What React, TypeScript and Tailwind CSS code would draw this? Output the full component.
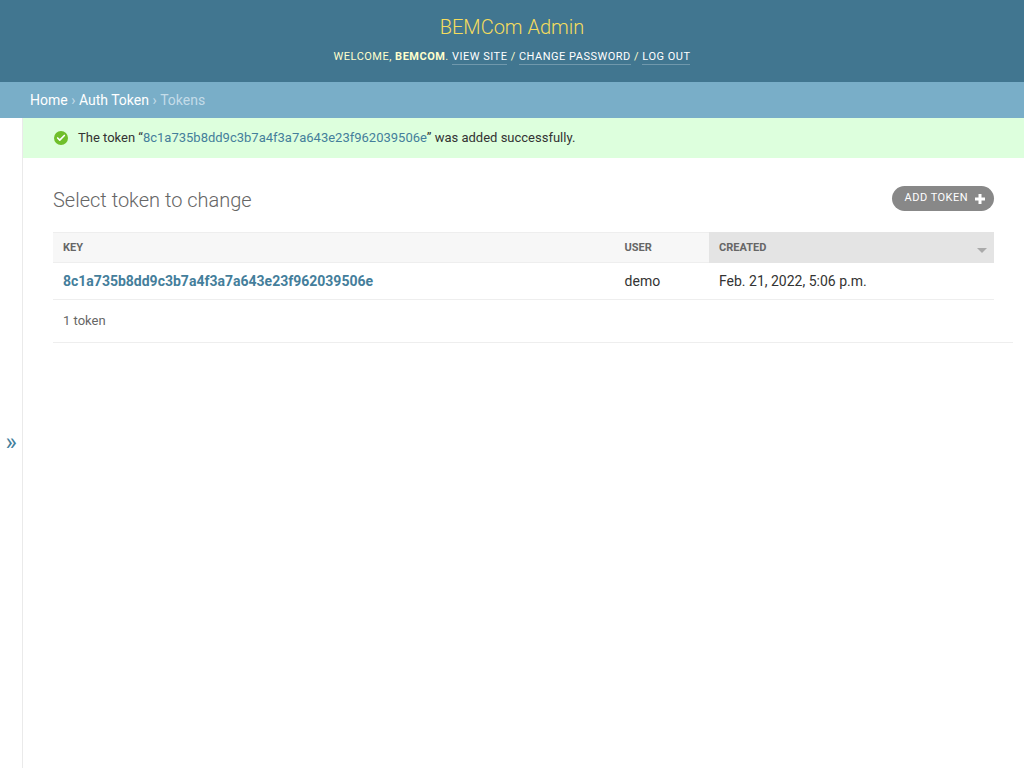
import React from 'react';
import { Check } from 'lucide-react';

const tokenKey = '8c1a735b8dd9c3b7a4f3a7a643e23f962039506e';

// Header link with the thin underline
const ToolLink: React.FC<{ children: React.ReactNode }> = ({ children }) => (
  <a className="border-b border-[#ffffff40] text-white pb-px">{children}</a>
);

export default function App() {
  return (
    <div className="min-h-[768px] h-[768px] overflow-hidden flex flex-col bg-white font-['Roboto',sans-serif] text-[#333]">
      {/* Header */}
      <header className="h-[82px] shrink-0 bg-[#417690] flex flex-col items-center pt-[14px]">
        <h1 className="text-[20px] leading-[26px] font-light text-[#f5dd5d]">BEMCom Admin</h1>
        <div className="mt-[9px] text-[11px] leading-[16px] tracking-[0.5px] uppercase text-[#ffffcc]">
          Welcome, <strong className="font-bold">BEMCom</strong>. <ToolLink>View site</ToolLink> /{' '}
          <ToolLink>Change password</ToolLink> / <ToolLink>Log out</ToolLink>
        </div>
      </header>

      {/* Breadcrumbs */}
      <nav className="h-[36px] shrink-0 bg-[#79aec8] pl-[30px] flex items-center text-[14px] text-[#c4dce8]">
        <a className="text-white">Home</a>
        <span className="mx-[3.5px]">›</span>
        <a className="text-white">Auth Token</a>
        <span className="mx-[3.5px]">›</span>
        <span>Tokens</span>
      </nav>

      <div className="flex flex-1 min-h-0">
        {/* Collapsed sidebar */}
        <aside className="w-[23px] shrink-0 border-r border-[#eaeaea] flex items-center justify-center">
          <span className="text-[24px] leading-none text-[#447e9b] mt-[-2px]">»</span>
        </aside>

        <main className="flex-1 min-w-0">
          {/* Success message */}
          <div className="h-[40px] bg-[#ddffdd] pl-[31px] flex items-center text-[13px] text-[#333]">
            <span className="w-[14px] h-[14px] rounded-full bg-[#70bf2b] flex items-center justify-center mr-[10px]">
              <Check className="w-[10px] h-[10px] text-white" strokeWidth={4} />
            </span>
            <span>
              The token “<a className="text-[#447e9b]">{tokenKey}</a>” was added successfully.
            </span>
          </div>

          <section className="pl-[30px] pr-[30px] pt-[28px]">
            <div className="flex items-start justify-between h-[46px]">
              <h2 className="text-[20px] leading-[28px] font-light text-[#666]">Select token to change</h2>
              <a className="h-[25px] w-[102px] rounded-[15px] bg-[#888888] text-white text-[11px] tracking-[0.5px] uppercase flex items-center pl-[12.5px] pr-[8px] justify-between">
                Add token
                <svg viewBox="0 0 12 12" className="w-[12px] h-[12px]">
                  <path d="M4.5 1h3v3.5H11v3H7.5V11h-3V7.5H1v-3h3.5z" fill="#ffffff" />
                </svg>
              </a>
            </div>

            <table className="w-[941px] table-fixed border-collapse text-[13px]">
              <colgroup>
                <col className="w-[561.6px]" />
                <col className="w-[94.4px]" />
                <col className="w-[285px]" />
              </colgroup>
              <thead>
                <tr className="h-[30px] text-[11px] font-bold uppercase text-[#666] text-left">
                  <th className="bg-[#f7f7f7] border-t border-b border-[#eeeeee] px-[10px] pt-[2px] font-bold">Key</th>
                  <th className="bg-[#f7f7f7] border-t border-b border-[#eeeeee] px-[10px] pt-[2px] font-bold">User</th>
                  <th className="bg-[#e4e4e4] border-t border-b border-[#e4e4e4] px-[10px] pt-[2px] font-bold relative">
                    Created
                    <span className="absolute right-[7px] top-[15px] w-0 h-0 border-l-[5px] border-r-[5px] border-t-[5px] border-l-transparent border-r-transparent border-t-[#aaaaaa]" />
                  </th>
                </tr>
              </thead>
              <tbody>
                <tr className="h-[37px] border-b border-[#eeeeee] text-[14px]">
                  <td className="px-[10px] font-bold text-[#447e9b]">{tokenKey}</td>
                  <td className="px-[10px]">demo</td>
                  <td className="px-[10px] pt-px whitespace-nowrap">Feb. 21, 2022, 5:06 p.m.</td>
                </tr>
              </tbody>
            </table>

            <div className="h-[43px] -mr-[19px] border-b border-[#eeeeee] pl-[10px] flex items-center text-[13px] text-[#666]">
              1 token
            </div>
          </section>
        </main>
      </div>
    </div>
  );
}
